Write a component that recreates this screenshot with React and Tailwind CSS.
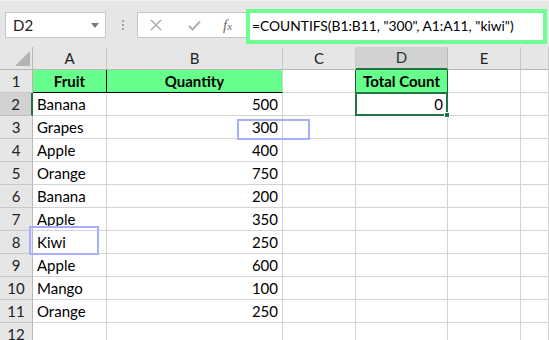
import React from "react";

const data = [
  ["Banana", 500],
  ["Grapes", 300],
  ["Apple", 400],
  ["Orange", 750],
  ["Banana", 200],
  ["Apple", 350],
  ["Kiwi", 250],
  ["Apple", 600],
  ["Mango", 100],
  ["Orange", 250],
];

const font = { fontFamily: "Lato, 'Open Sans', sans-serif" };

function Cell({ children, className = "" }) {
  return (
    <div className={"border-r border-b border-[#d4d4d4] flex items-center text-[15px] text-black " + className}>
      {children}
    </div>
  );
}

function RowHead({ n, active }) {
  return (
    <div
      className={
        "border-b flex items-center justify-center text-[15px] text-[#222] " +
        (active
          ? "bg-[#d2d2d2] border-[#c0c0c0] border-r-2 border-r-[#217346]"
          : "bg-[#e6e6e6] border-[#c8c8c8] border-r border-r-[#b8b8b8]")
      }
    >
      {n}
    </div>
  );
}

export default function App() {
  return (
    <div className="relative w-[549px] h-[340px] overflow-hidden bg-white" style={font}>
      {/* Toolbar */}
      <div className="h-[47px] bg-[#e6e6e6] border-t border-[#f2f2f2] flex items-start pt-[11px]">
        <div className="ml-[5px] w-[101px] h-[26px] bg-white border border-[#c6c6c6] flex items-center justify-between pl-[7px] pr-[6px]">
          <span className="text-[15px] text-[#222]">D2</span>
          <svg width="8" height="5" viewBox="0 0 8 5"><path d="M0 0h8L4 5z" fill="#7a7a7a" /></svg>
        </div>
        <div className="ml-[15px] w-[3px] h-[26px] flex flex-col items-center justify-center gap-[2px]">
          <div className="w-[2px] h-[2px] bg-[#a0a0a0]" />
          <div className="w-[2px] h-[2px] bg-[#a0a0a0]" />
          <div className="w-[2px] h-[2px] bg-[#a0a0a0]" />
        </div>
        <div className="ml-[13px] flex-1 mr-[2px] h-[26px] bg-white border border-[#c6c6c6] flex items-center">
          <svg className="ml-[12px]" width="12" height="12" viewBox="0 0 12 12">
            <path d="M1 1L11 11M11 1L1 11" stroke="#b0b0b0" strokeWidth="1.6" />
          </svg>
          <svg className="ml-[26px]" width="13" height="11" viewBox="0 0 13 11">
            <path d="M1 6L4.5 9.5L12 1.5" stroke="#b0b0b0" strokeWidth="2" fill="none" />
          </svg>
          <span className="ml-[22px] text-[15px] italic text-[#6a6a6a]" style={{ fontFamily: "'Liberation Serif', serif" }}>
            f<span className="text-[11px]">x</span>
          </span>
        </div>
      </div>

      {/* Grid */}
      <div className="grid grid-cols-[33px_74px_176px_73px_92px_73px_1fr] auto-rows-[23px]">
        {/* header row */}
        <div className="bg-[#e6e6e6] border-r border-b border-[#b8b8b8] flex items-end justify-end pr-[2px] pb-[3px]">
          <svg width="15" height="15" viewBox="0 0 15 15"><path d="M15 0V15H0z" fill="#b4b4b4" /></svg>
        </div>
        {["A", "B", "C", "D", "E", ""].map((c) => (
          <div
            key={c}
            className={
              "flex items-center justify-center text-[15px] border-r " +
              (c === "D"
                ? "bg-[#d2d2d2] border-[#b8b8b8] border-b-2 border-b-[#217346] text-[#1e3a2a]"
                : "bg-[#e6e6e6] border-[#c8c8c8] border-b border-b-[#b8b8b8] text-[#222]")
            }
          >
            {c}
          </div>
        ))}

        {/* row 1 */}
        <RowHead n={1} />
        <div className="bg-[#66ff8c] border-r border-r-black border-b border-b-black flex items-center justify-center text-[15px] font-bold text-black">
          Fruit
        </div>
        <div className="bg-[#66ff8c] border-r border-r-[#d4d4d4] border-b border-b-black flex items-center justify-center text-[15px] font-bold text-black">
          Quantity
        </div>
        <Cell />
        <div className="bg-[#66ff8c] border-l border-r border-[#1f5e3b] -ml-px flex items-center justify-center text-[15px] font-bold text-black">
          Total Count
        </div>
        <Cell />
        <Cell />

        {data.map(([f, q], i) => {
          const r = i + 2;
          return (
            <React.Fragment key={r}>
              <RowHead n={r} active={r === 2} />
              <Cell className="pl-[4px]">{f}</Cell>
              <Cell className="justify-end pr-[4px]">{q}</Cell>
              <Cell />
              {r === 2 ? (
                <div className="relative -ml-px -mt-px border-2 border-[#217346] flex items-center justify-end pr-[3px] text-[15px] text-black">
                  0
                  <div className="absolute -right-[4px] -bottom-[4px] w-[6px] h-[6px] bg-[#217346] border border-white" />
                </div>
              ) : (
                <Cell />
              )}
              <Cell />
              <Cell />
            </React.Fragment>
          );
        })}
        <RowHead n={12} />
        <Cell />
        <Cell />
        <Cell />
        <Cell />
        <Cell />
        <Cell />
      </div>

      {/* Formula highlight box */}
      <div className="absolute left-[246px] top-[9px] w-[301px] h-[35px] border-4 border-[#6dff8f] bg-white flex items-center pl-[2px]">
        <span className="text-[13.8px] text-black whitespace-nowrap">=COUNTIFS(B1:B11, "300", A1:A11, "kiwi")</span>
      </div>

      {/* Blue annotation boxes */}
      <div className="absolute left-[237px] top-[119px] w-[73px] h-[21px] border-2 border-[#a8aefc]" />
      <div className="absolute left-[29px] top-[226px] w-[70px] h-[29px] border-2 border-[#a8aefc]" />
    </div>
  );
}
